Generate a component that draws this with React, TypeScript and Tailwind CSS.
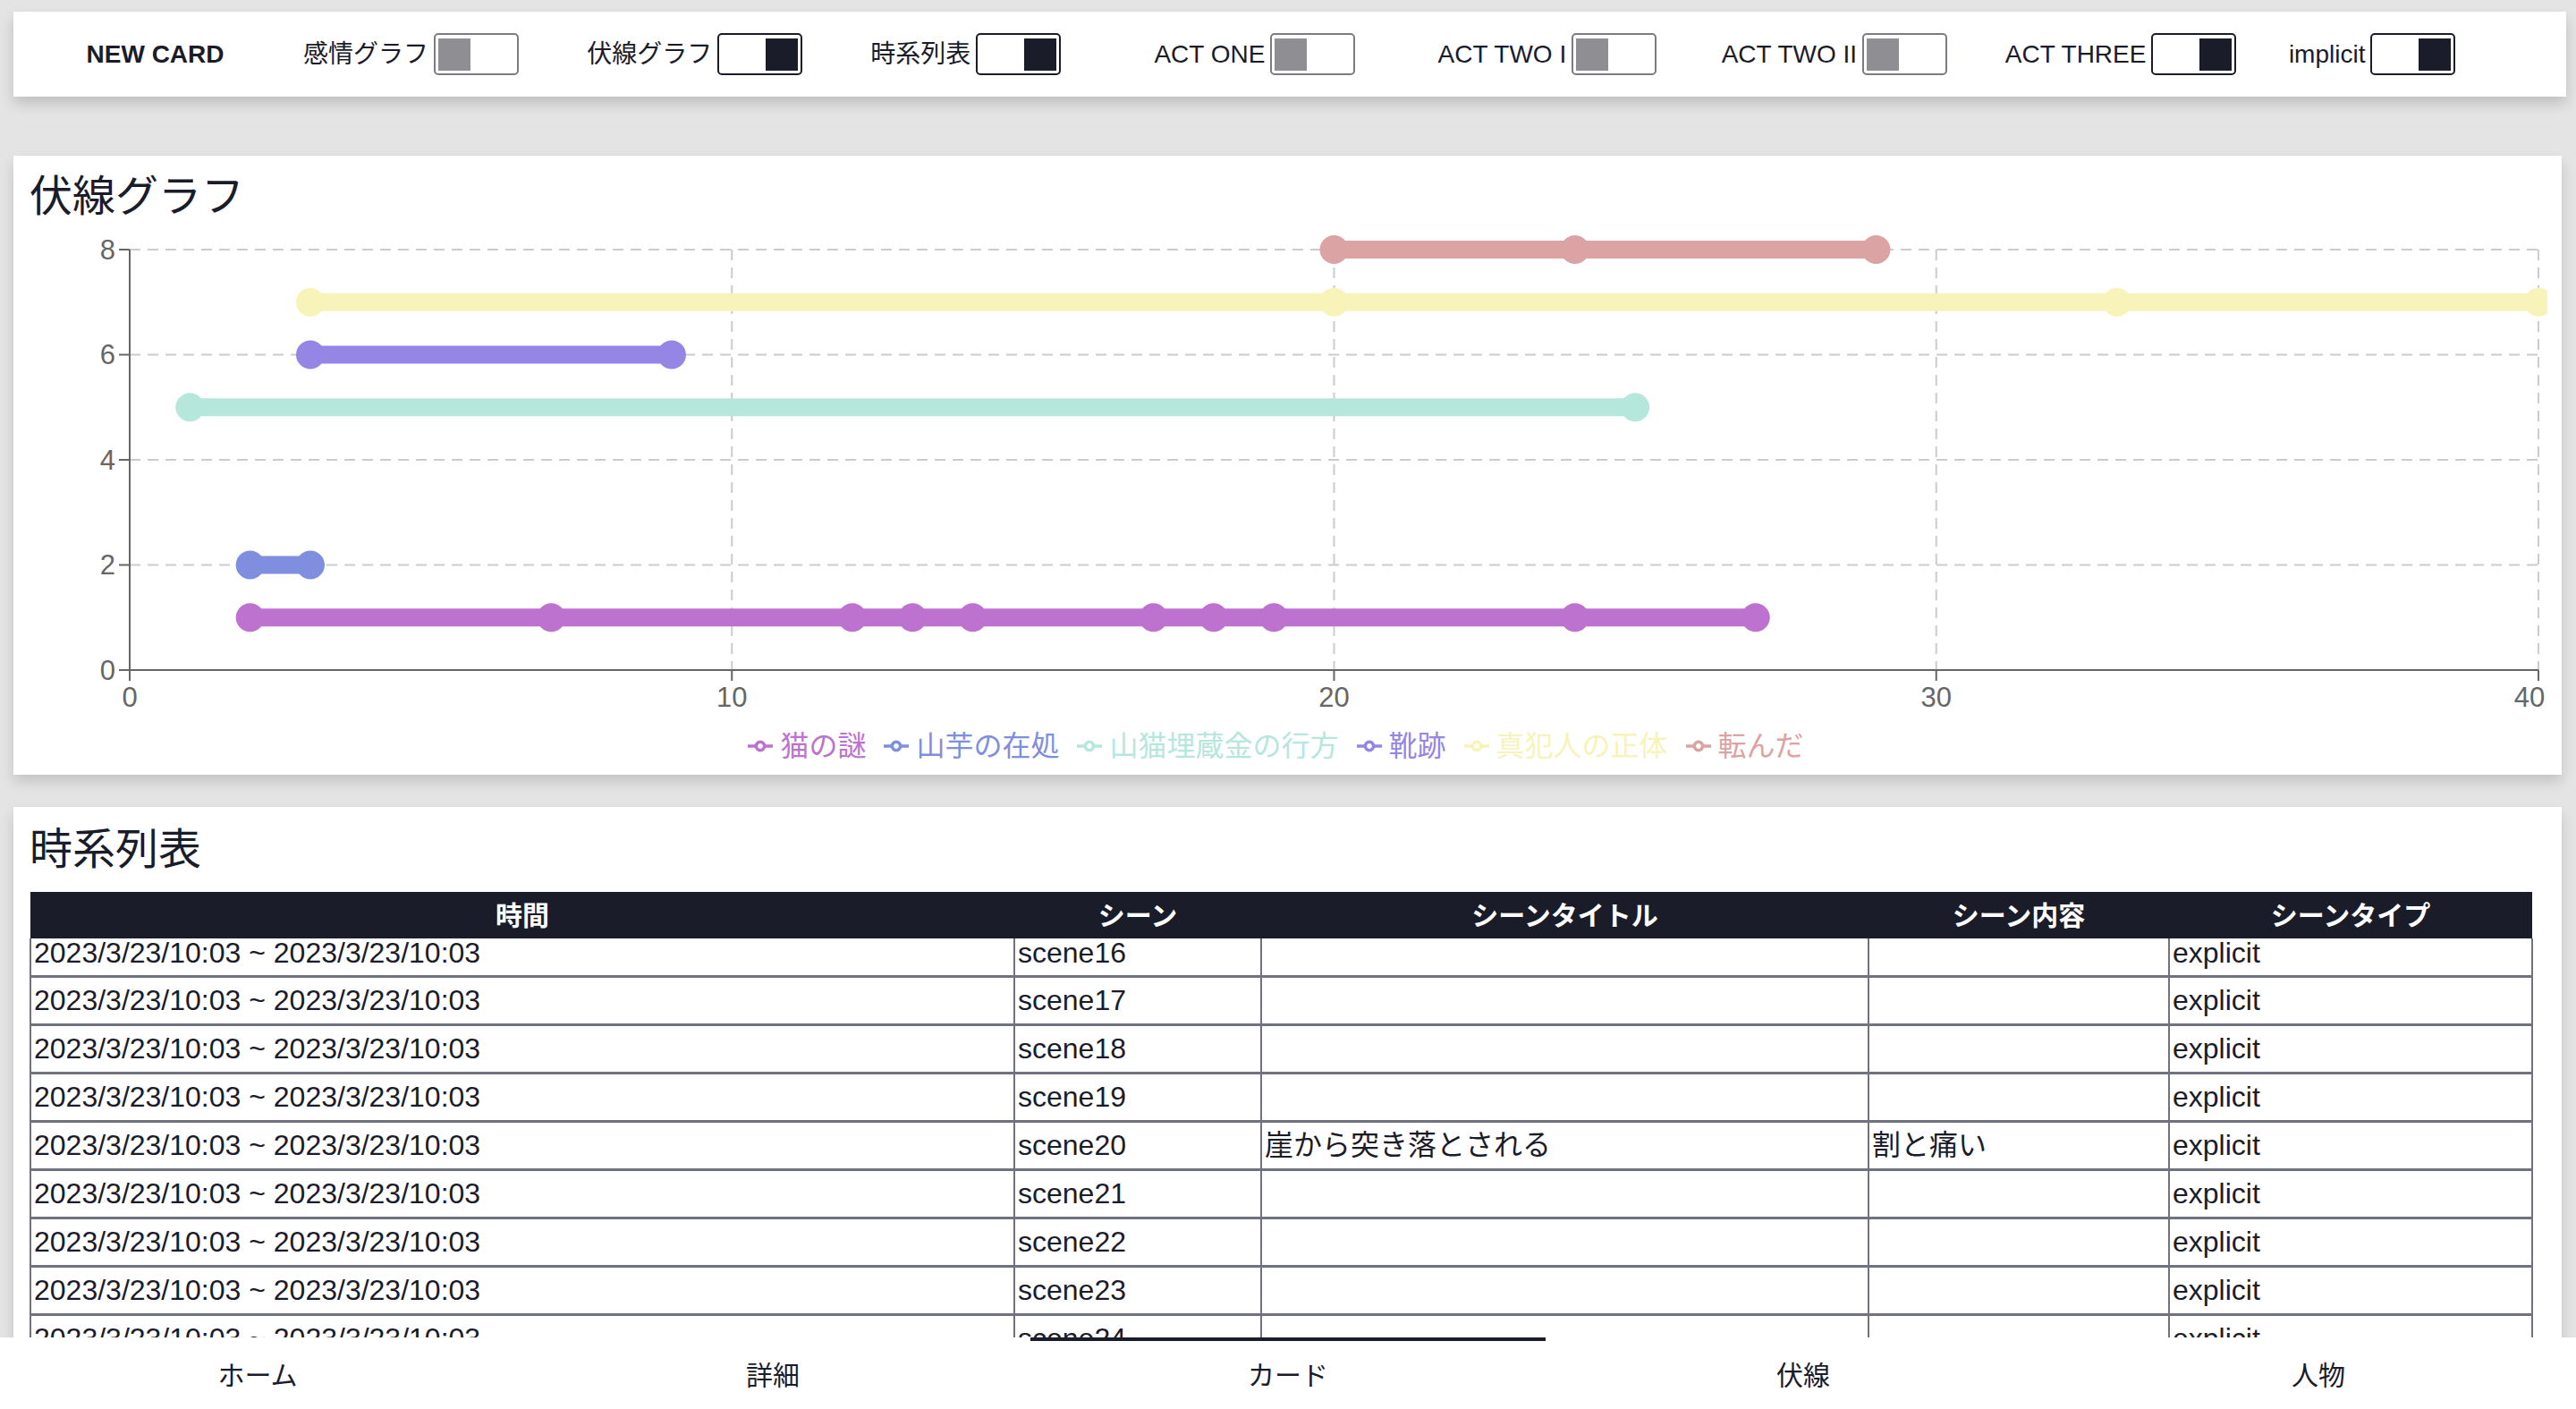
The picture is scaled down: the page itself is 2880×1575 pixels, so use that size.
import clsx from 'clsx';

const DARK = '#1b1c2a';

const switches = [
  { label: '感情グラフ', on: false },
  { label: '伏線グラフ', on: true },
  { label: '時系列表', on: true },
  { label: 'ACT ONE', on: false },
  { label: 'ACT TWO I', on: false },
  { label: 'ACT TWO II', on: false },
  { label: 'ACT THREE', on: true },
  { label: 'implicit', on: true },
];

const series = [
  { name: '猫の謎', color: '#bd72cf', y: 1, points: [2, 7, 12, 13, 14, 17, 18, 19, 24, 27] },
  { name: '山芋の在処', color: '#7f8edf', y: 2, points: [2, 3] },
  { name: '山猫埋蔵金の行方', color: '#b5e7dd', y: 5, points: [1, 25] },
  { name: '靴跡', color: '#9585e5', y: 6, points: [3, 9] },
  { name: '真犯人の正体', color: '#f8f3b9', y: 7, points: [3, 20, 33, 40] },
  { name: '転んだ', color: '#dba3a3', y: 8, points: [20, 24, 29] },
];

const rows = [16, 17, 18, 19, 20, 21, 22, 23, 24].map((n) => ({
  time: '2023/3/23/10:03 ~ 2023/3/23/10:03',
  scene: `scene${n}`,
  title: n === 20 ? '崖から突き落とされる' : '',
  content: n === 20 ? '割と痛い' : '',
  type: 'explicit',
}));

const tabs = ['ホーム', '詳細', 'カード', '伏線', '人物'];

// chart geometry (px inside the svg)
const W = 2815;
const H = 550;
const X0 = 112;
const XU = 67.325;
const Y0 = 497;
const YU = 58.75;
const sx = (v: number) => X0 + v * XU;
const sy = (v: number) => Y0 - v * YU;

function Toggle({ on }: { on: boolean }) {
  return (
    <div
      className={clsx(
        'flex h-[47px] w-[95px] shrink-0 items-center rounded-[5px] border-2 p-[3px]',
        on ? 'justify-end border-[#1b1c2a]' : 'justify-start border-[#7b7b82]'
      )}
    >
      <div className={clsx('h-[36px] w-[36px]', on ? 'bg-[#1b1c2a]' : 'bg-[#8e8e93]')} />
    </div>
  );
}

function LegendIcon({ color }: { color: string }) {
  return (
    <svg width="28" height="28" viewBox="0 0 32 32" className="mr-[8px] shrink-0">
      <path
        strokeWidth="4"
        fill="none"
        stroke={color}
        d="M0,16h10.67A5.33,5.33,0,1,1,21.33,16H32M21.33,16A5.33,5.33,0,1,1,10.67,16"
      />
    </svg>
  );
}

function ForeshadowChart() {
  const gridX = [10, 20, 30, 40];
  const gridY = [2, 4, 6, 8];
  return (
    <svg width={W} height={H} className="block overflow-hidden">
      {gridY.map((v) => (
        <line key={`gy${v}`} x1={sx(0)} x2={sx(40)} y1={sy(v)} y2={sy(v)} stroke="#cccccc" strokeWidth="2" strokeDasharray="12 8" />
      ))}
      {gridX.map((v) => (
        <line key={`gx${v}`} x1={sx(v)} x2={sx(v)} y1={sy(8)} y2={sy(0)} stroke="#cccccc" strokeWidth="2" strokeDasharray="12 8" />
      ))}

      {/* axes */}
      <line x1={sx(0)} x2={sx(0)} y1={sy(8)} y2={sy(0)} stroke="#666" strokeWidth="2" />
      <line x1={sx(0)} x2={sx(40)} y1={sy(0)} y2={sy(0)} stroke="#666" strokeWidth="2" />
      {[0, 2, 4, 6, 8].map((v) => (
        <g key={`ty${v}`}>
          <line x1={sx(0) - 12} x2={sx(0)} y1={sy(v)} y2={sy(v)} stroke="#666" strokeWidth="2" />
          <text x={sx(0) - 16} y={sy(v)} textAnchor="end" dominantBaseline="central" fill="#666" fontSize="31">
            {v}
          </text>
        </g>
      ))}
      {[0, 10, 20, 30, 40].map((v) => (
        <g key={`tx${v}`}>
          <line x1={sx(v)} x2={sx(v)} y1={sy(0)} y2={sy(0) + 12} stroke="#666" strokeWidth="2" />
          <text
            x={v === 40 ? sx(v) - 10 : sx(v)}
            y={sy(0) + 30}
            textAnchor="middle"
            dominantBaseline="central"
            fill="#666"
            fontSize="31"
          >
            {v}
          </text>
        </g>
      ))}

      {series.map((s) => (
        <g key={s.name}>
          <line
            x1={sx(s.points[0])}
            x2={sx(s.points[s.points.length - 1])}
            y1={sy(s.y)}
            y2={sy(s.y)}
            stroke={s.color}
            strokeWidth="20"
          />
          {s.points.map((p) => (
            <circle key={p} cx={sx(p)} cy={sy(s.y)} r="16" fill={s.color} />
          ))}
        </g>
      ))}
    </svg>
  );
}

export default function App() {
  return (
    <div className="flex h-[1575px] flex-col overflow-hidden bg-[#e4e4e4] font-['Liberation_Sans','Noto_Sans_CJK_JP',sans-serif] text-[#1b1c2a]">
      <div className="flex-1 overflow-hidden">
        {/* top switch bar */}
        <header className="ml-[15px] mr-[11px] mt-[13px] grid h-[95px] grid-cols-9 items-center bg-white shadow-[0_8px_14px_rgba(0,0,0,0.16)]">
          <div className="text-center text-[28px] font-bold">NEW CARD</div>
          {switches.map((s) => (
            <div key={s.label} className="flex items-center gap-[6px] px-[7px]">
              <span className="whitespace-nowrap text-[28px]">{s.label}</span>
              <Toggle on={s.on} />
            </div>
          ))}
        </header>

        {/* foreshadow chart */}
        <section className="ml-[15px] mr-[16px] mt-[66px] bg-white pl-[18px] pr-[16px] pt-[14px] shadow-[0_8px_14px_rgba(0,0,0,0.14)]">
          <h2 className="text-[48px] leading-[64px]">伏線グラフ</h2>
          <ForeshadowChart />
          <ul className="flex h-[64px] items-center justify-center pr-[8px]">
            {series.map((s) => (
              <li key={s.name} className="mr-[20px] flex items-center">
                <LegendIcon color={s.color} />
                <span className="text-[32px] leading-[40px]" style={{ color: s.color }}>
                  {s.name}
                </span>
              </li>
            ))}
          </ul>
        </section>

        {/* timeline table */}
        <section className="ml-[15px] mr-[16px] mt-[36px] bg-white pl-[18px] pt-[16px] shadow-[0_8px_14px_rgba(0,0,0,0.14)]">
          <h2 className="mb-[15px] text-[48px] leading-[64px]">時系列表</h2>
          <table className="w-[2797px] table-fixed border-collapse">
            <colgroup>
              <col className="w-[1100px]" />
              <col className="w-[276px]" />
              <col className="w-[679px]" />
              <col className="w-[336px]" />
              <col className="w-[406px]" />
            </colgroup>
            <thead>
              <tr className="h-[52px] bg-[#1b1c2a] text-[30px] font-bold text-white">
                <th>時間</th>
                <th>シーン</th>
                <th>シーンタイトル</th>
                <th>シーン内容</th>
                <th>シーンタイプ</th>
              </tr>
            </thead>
            <tbody className="text-[32px]">
              {rows.map((r, i) => {
                const cell = clsx(
                  'border-x-2 border-[#70737d] px-[3px] leading-[32px] whitespace-nowrap',
                  i === 0 ? 'h-[42px] align-top' : 'h-[54px] align-middle'
                );
                return (
                  <tr key={r.scene} className="border-b-[3px] border-[#70737d]">
                    <td className={cell}>{r.time}</td>
                    <td className={cell}>{r.scene}</td>
                    <td className={cell}>{r.title}</td>
                    <td className={cell}>{r.content}</td>
                    <td className={cell}>{r.type}</td>
                  </tr>
                );
              })}
            </tbody>
          </table>
        </section>
      </div>

      {/* bottom navigation */}
      <nav className="grid h-[80px] shrink-0 grid-cols-5 bg-white">
        {tabs.map((t) => (
          <div
            key={t}
            className={clsx(
              'flex items-center justify-center border-t-4 text-[30px]',
              t === 'カード' ? 'border-[#1b1c2a]' : 'border-transparent'
            )}
            style={{ color: DARK }}
          >
            {t}
          </div>
        ))}
      </nav>
    </div>
  );
}
